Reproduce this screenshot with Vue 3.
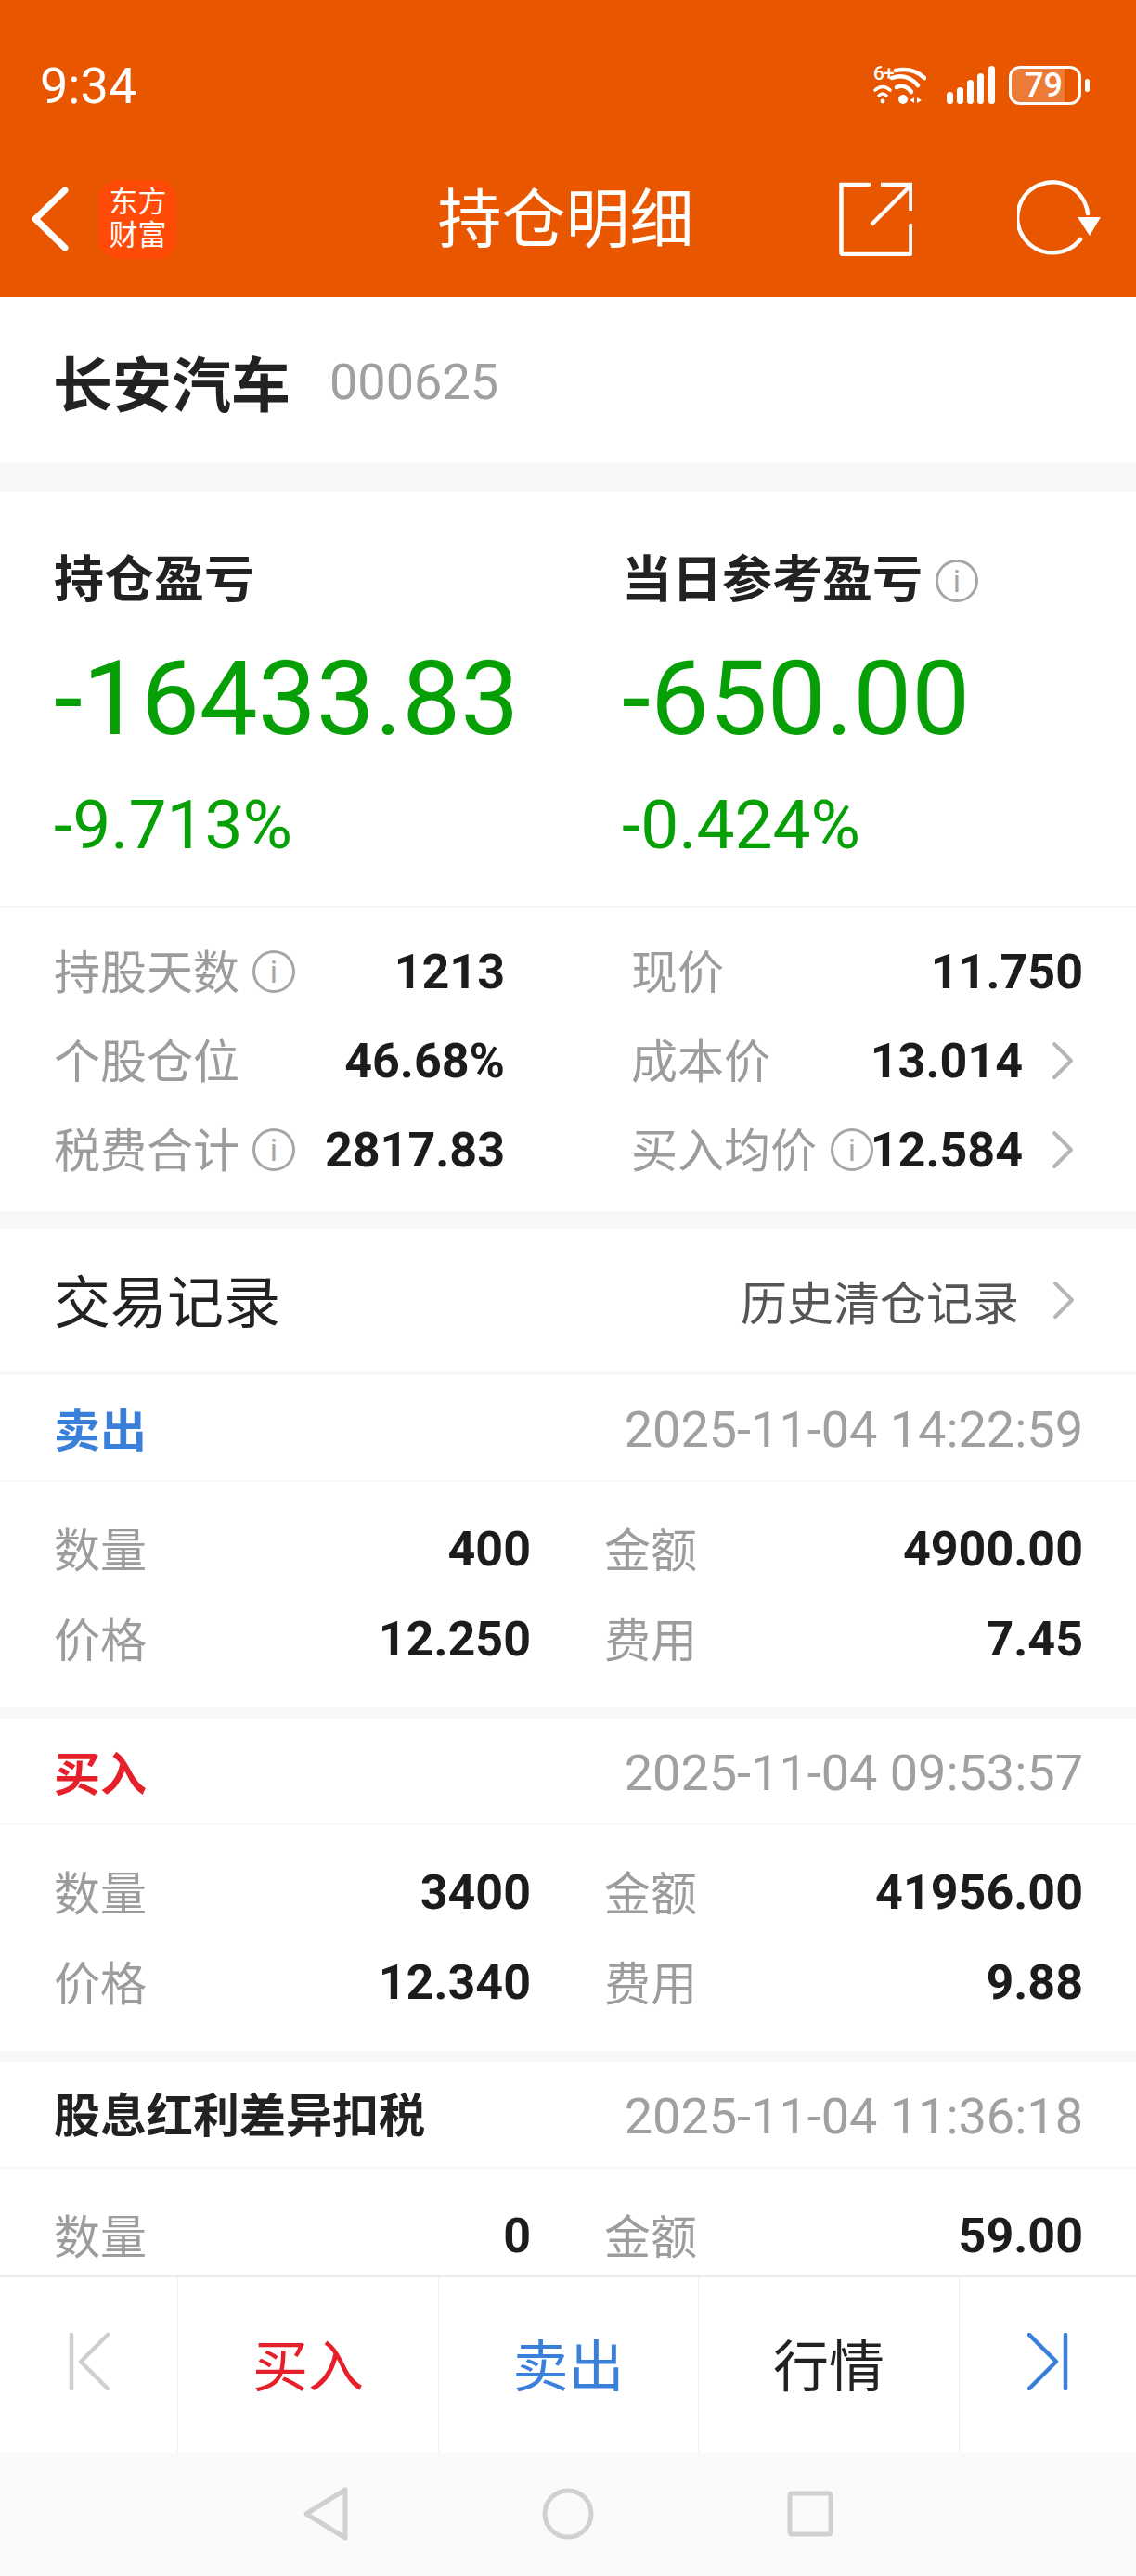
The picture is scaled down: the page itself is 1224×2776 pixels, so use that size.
<script setup>
const summary = [
  { title: '持仓盈亏', info: false, value: '-16433.83', pct: '-9.713%' },
  { title: '当日参考盈亏', info: true, value: '-650.00', pct: '-0.424%' }
]
const stats = [
  { left: '持股天数', leftInfo: true, leftVal: '1213', right: '现价', rightVal: '11.750' },
  { left: '个股仓位', leftVal: '46.68%', right: '成本价', rightVal: '13.014', more: true },
  { left: '税费合计', leftInfo: true, leftVal: '2817.83', right: '买入均价', rightInfo: true, rightVal: '12.584', more: true }
]
const trades = [
  { name: '卖出', cls: 'sell', time: '2025-11-04 14:22:59', qty: '400', amount: '4900.00', price: '12.250', fee: '7.45' },
  { name: '买入', cls: 'buy', time: '2025-11-04 09:53:57', qty: '3400', amount: '41956.00', price: '12.340', fee: '9.88' },
  { name: '股息红利差异扣税', cls: 'tax', time: '2025-11-04 11:36:18', qty: '0', amount: '59.00' }
]
</script>

<template>
  <div class="page">
    <header class="top">
      <div class="status">
        <span class="clock">9:34</span>
        <div class="status-icons">
          <div class="wifi">
            <span class="six">6+</span>
            <svg class="wifi-svg" width="57" height="43" viewBox="0 0 57 43" fill="none" stroke="#fff" stroke-linecap="round">
              <path d="M2 27 Q10 20 18 27" stroke-width="3.5" />
              <path d="M6 33 Q10 29 14 33" stroke-width="3.5" />
              <circle cx="10" cy="39" r="2.4" fill="#fff" stroke="none" />
              <path d="M24 6 Q42 2 55 14" stroke-width="4.5" />
              <path d="M20 14 Q36 8 48 22" stroke-width="4.5" />
              <path d="M25 24 Q34 20 41 29" stroke-width="4.5" />
              <circle cx="32" cy="37" r="5" fill="#fff" stroke="none" />
              <path d="M44 35 L39.500 38 L44 41 Z M47 41 L52 38 L47 35 Z" fill="#fff" stroke="none" />
            </svg>
          </div>
          <svg class="signal" width="52" height="41" viewBox="0 0 52 41" fill="#fff">
            <rect x="0" y="28" width="7" height="13" rx="3.500" />
            <rect x="11" y="23" width="7" height="18" rx="3.500" />
            <rect x="22" y="15" width="7" height="26" rx="3.500" />
            <rect x="33" y="8" width="7" height="33" rx="3.500" />
            <rect x="45" y="0" width="7" height="41" rx="3.500" />
          </svg>
          <div class="battery">
            <div class="cell"><span class="level">79</span></div>
            <i class="nub"></i>
          </div>
        </div>
      </div>
      <div class="nav">
        <div class="nav-left">
          <svg width="42" height="70" viewBox="0 0 42 70" fill="none" stroke="#fff" stroke-width="7" stroke-linecap="round" stroke-linejoin="round">
            <path d="M37 4 L5 35 L37 66" />
          </svg>
          <div class="logo"><span>东方</span><span>财富</span></div>
        </div>
        <h1 class="title">持仓明细</h1>
        <div class="nav-right">
          <svg width="80" height="80" viewBox="0 0 80 80" fill="none" stroke="#fff" stroke-width="4.500">
            <path d="M33 3 H3.500 V76 Q3.500 78 6 78 H76 Q78.500 78 78.500 76 V47" stroke-linecap="round" />
            <path d="M36 46 L77 5" />
            <path d="M46 3 H78.500 V31" />
          </svg>
          <svg width="90" height="84" viewBox="0 0 90 84" fill="none">
            <path d="M68 64 A38 38 0 1 1 76 36" stroke="#fff" stroke-width="4.500" stroke-linecap="round" />
            <path d="M65 40 H90 L78 60 Z" fill="#fff" />
          </svg>
        </div>
      </div>
    </header>

    <main class="scroll">
      <section class="name-row">
        <strong class="stock">长安汽车</strong>
        <span class="code">000625</span>
      </section>

      <section class="summary">
        <div v-for="s in summary" :key="s.title" class="sum-col">
          <div class="sum-title">
            {{ s.title }}
            <span v-if="s.info" class="info big">i</span>
          </div>
          <div class="sum-value">{{ s.value }}</div>
          <div class="sum-pct">{{ s.pct }}</div>
        </div>
      </section>

      <section class="stats">
        <div v-for="r in stats" :key="r.left" class="stat-row">
          <div class="stat-left">
            <span class="label">{{ r.left }}</span>
            <span v-if="r.leftInfo" class="info">i</span>
            <b class="val">{{ r.leftVal }}</b>
          </div>
          <div class="stat-right">
            <span class="label">{{ r.right }}</span>
            <span v-if="r.rightInfo" class="info tight">i</span>
            <b class="val" :class="{ short: r.more }">{{ r.rightVal }}</b>
            <svg v-if="r.more" class="chev" width="24" height="42" viewBox="0 0 24 42" fill="none" stroke="#b5b5b5" stroke-width="4" stroke-linecap="round" stroke-linejoin="round">
              <path d="M3 3 L21 21 L3 39" />
            </svg>
          </div>
        </div>
      </section>

      <section class="record-head">
        <span class="record-title">交易记录</span>
        <div class="history">
          <span>历史清仓记录</span>
          <svg width="24" height="42" viewBox="0 0 24 42" fill="none" stroke="#b5b5b5" stroke-width="4" stroke-linecap="round" stroke-linejoin="round">
            <path d="M3 3 L21 21 L3 39" />
          </svg>
        </div>
      </section>

      <article v-for="t in trades" :key="t.time" class="trade">
        <div class="trade-head">
          <b class="trade-name" :class="t.cls">{{ t.name }}</b>
          <span class="trade-time">{{ t.time }}</span>
        </div>
        <div class="trade-body">
          <div class="cell-pair"><span class="label">数量</span><b class="val">{{ t.qty }}</b></div>
          <div class="cell-pair"><span class="label">金额</span><b class="val">{{ t.amount }}</b></div>
          <template v-if="t.price">
            <div class="cell-pair"><span class="label">价格</span><b class="val">{{ t.price }}</b></div>
            <div class="cell-pair"><span class="label">费用</span><b class="val">{{ t.fee }}</b></div>
          </template>
        </div>
      </article>
    </main>

    <footer class="actions">
      <div class="act edge first">
        <svg width="44" height="62" viewBox="0 0 44 62" fill="none" stroke="#cfcfcf" stroke-width="4.500" stroke-linecap="round" stroke-linejoin="round">
          <path d="M3 2 V60 M42 2 L13 31 L42 60" />
        </svg>
      </div>
      <div class="act buy">买入</div>
      <div class="act sell">卖出</div>
      <div class="act market">行情</div>
      <div class="act edge">
        <svg width="44" height="62" viewBox="0 0 44 62" fill="none" stroke="#3a7fd9" stroke-width="4.500" stroke-linecap="round" stroke-linejoin="round">
          <path d="M41 2 V60 M2 2 L31 31 L2 60" />
        </svg>
      </div>
    </footer>

    <div class="sysnav">
      <svg width="50" height="58" viewBox="0 0 50 58" fill="none" stroke="#d0d0d0" stroke-width="5" stroke-linejoin="round">
        <path d="M46 3 V55 L4 29 Z" />
      </svg>
      <svg width="56" height="56" viewBox="0 0 56 56" fill="none" stroke="#d0d0d0" stroke-width="5">
        <circle cx="28" cy="28" r="25" />
      </svg>
      <svg width="50" height="50" viewBox="0 0 50 50" fill="none" stroke="#d0d0d0" stroke-width="5" stroke-linejoin="round">
        <rect x="3" y="3" width="44" height="44" rx="2" />
      </svg>
    </div>
  </div>
</template>

<style scoped>
.page {
  width: 1224px;
  height: 2776px;
  display: flex;
  flex-direction: column;
  overflow: hidden;
  background: #fff;
  color: #222;
  font-family: Roboto, "Noto Sans CJK SC", sans-serif;
}
.top {
  height: 320px;
  flex: none;
  background: #e85700;
  color: #fff;
  display: flex;
  flex-direction: column;
}
.status {
  height: 184px;
  padding: 70px 50px 0 43px;
  box-sizing: border-box;
  display: flex;
  justify-content: space-between;
  align-items: flex-start;
}
.clock {
  font-size: 54px;
  line-height: 46px;
  font-weight: 400;
}
.status-icons {
  display: flex;
  align-items: center;
  gap: 22px;
}
.signal { margin-right: -7px; }
.wifi {
  display: flex;
  align-items: flex-start;
  width: 57px;
  height: 43px;
}
.six {
  font-size: 21px;
  line-height: 19px;
  font-weight: 500;
  letter-spacing: -1px;
  width: 0;
  white-space: nowrap;
}
.wifi-svg { flex: none; }
.battery {
  display: flex;
  align-items: center;
  gap: 4px;
}
.cell {
  width: 78px;
  height: 42px;
  box-sizing: border-box;
  border: 3px solid #fff;
  border-radius: 12px;
  overflow: hidden;
}
.level {
  display: block;
  width: 43px;
  height: 100%;
  padding-left: 14px;
  box-sizing: content-box;
  background: rgba(255, 255, 255, 0.22);
  font-size: 36px;
  line-height: 36px;
  font-weight: 500;
}
.nub {
  width: 5px;
  height: 14px;
  background: #fff;
  border-radius: 3px;
}
.nav {
  display: grid;
  grid-template-columns: 1fr auto 1fr;
  align-items: center;
  height: 100px;
  padding: 0 38px 0 33px;
}
.nav-left {
  display: flex;
  align-items: center;
  gap: 32px;
}
.logo {
  width: 83px;
  height: 85px;
  background: #ff4a08;
  border-radius: 20px;
  display: flex;
  flex-direction: column;
  align-items: center;
  justify-content: center;
  font-size: 31px;
  line-height: 36px;
  font-weight: 400;
}
.title {
  margin: 0;
  padding-top: 4px;
  font-size: 69px;
  line-height: 100px;
  font-weight: 400;
}
.nav-right {
  display: flex;
  justify-content: flex-end;
  align-items: center;
  gap: 113px;
}
.scroll {
  flex: 1;
  min-height: 0;
  overflow: hidden;
  background: #f6f7f9;
}
.name-row {
  height: 179px;
  background: #fff;
  padding: 0 58px;
  display: flex;
  align-items: center;
  gap: 42px;
  margin-bottom: 31px;
}
.stock {
  font-size: 64px;
  font-weight: 700;
  margin-left: -1px;
}
.code {
  padding-top: 3px;
  font-size: 54px;
  color: #a0a0a0;
}
.summary {
  height: 448px;
  box-sizing: border-box;
  background: #fff;
  padding: 63px 58px 0;
  display: grid;
  grid-template-columns: 612px 1fr;
  border-bottom: 2px solid #f6f6f6;
}
.sum-title {
  display: flex;
  align-items: center;
  font-size: 54px;
  line-height: 66px;
  font-weight: 700;
  gap: 14px;
}
.sum-value {
  margin-top: 34px;
  font-size: 112px;
  line-height: 120px;
  color: #06a006;
}
.sum-pct {
  margin-top: 36px;
  font-size: 73px;
  line-height: 80px;
  color: #06a006;
}
.stats {
  height: 327px;
  box-sizing: border-box;
  background: #fff;
  padding: 21px 57px 0 58px;
  margin-bottom: 19px;
}
.stat-row {
  height: 96px;
  display: grid;
  grid-template-columns: 486px 487px;
  column-gap: 136px;
  align-items: center;
}
.stat-left, .stat-right {
  display: flex;
  align-items: center;
}
.label {
  flex: none;
  margin-bottom: 6px;
  font-size: 50px;
  color: #9c9c9c;
  white-space: nowrap;
}
.val {
  flex: none;
  margin-left: auto;
  font-size: 52px;
  font-weight: 700;
  color: #1c1c1c;
  white-space: nowrap;
}
.val.short { margin-right: 31px; }
.chev {
  flex: none;
  margin-right: 10px;
}
.info {
  width: 46px;
  height: 46px;
  margin-left: 14px;
  box-sizing: border-box;
  border: 3px solid #a6a6a6;
  border-radius: 50%;
  color: #a6a6a6;
  font: 400 34px/40px Roboto, sans-serif;
  text-align: center;
  flex: none;
}
.info.big {
  margin-left: 0;
}
.info.tight {
  margin-left: 15px;
  margin-right: -8px;
}
.record-head {
  height: 153px;
  background: #fff;
  padding: 0 66px 0 58px;
  display: flex;
  justify-content: space-between;
  align-items: center;
  margin-bottom: 5px;
}
.record-title {
  font-size: 61px;
  color: #222;
  margin-bottom: 2px;
}
.history {
  display: flex;
  align-items: center;
  gap: 36px;
  font-size: 50px;
  color: #555;
}
.trade {
  background: #fff;
  margin-bottom: 12px;
  padding-bottom: 25px;
}
.trade-head {
  height: 115px;
  box-sizing: border-box;
  padding: 3px 57px 0 58px;
  display: flex;
  justify-content: space-between;
  align-items: center;
  border-bottom: 2px solid #f7f7f7;
}
.trade-name {
  margin-bottom: 5px;
  font-size: 50px;
  font-weight: 700;
}
.trade-name.tax {
  margin-bottom: 8px;
  color: #222;
}
.trade-time {
  font-size: 54px;
  color: #a0a0a0;
}
.sell { color: #3a7fd9; }
.buy { color: #e5202a; }
.trade-body {
  padding: 24px 57px 0 58px;
  display: grid;
  grid-template-columns: 514px 516px;
  column-gap: 79px;
  grid-auto-rows: 97px;
  align-items: center;
}
.cell-pair {
  display: flex;
  align-items: center;
}
.actions {
  flex: none;
  height: 190px;
  box-sizing: border-box;
  background: #fff;
  border-top: 2px solid #ececec;
  display: grid;
  grid-template-columns: 191px 281px 280px 281px 191px;
}
.act {
  display: flex;
  align-items: center;
  justify-content: center;
  padding-bottom: 6px;
  font-size: 60px;
  border-left: 1px solid #efefef;
}
.act.first { border-left: none; }
.market { color: #222; }
.sysnav {
  flex: none;
  height: 134px;
  background: #fafafa;
  display: flex;
  align-items: center;
  justify-content: center;
  gap: 208px;
}
</style>
